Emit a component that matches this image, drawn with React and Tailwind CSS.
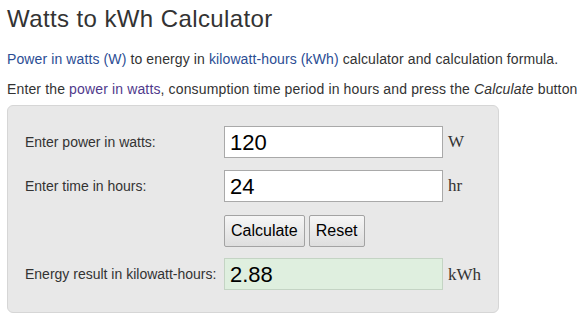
import React, { useState } from 'react';

function App() {
  const [watts, setWatts] = useState('120');
  const [hours, setHours] = useState('24');
  const [result, setResult] = useState('2.88');

  const calculate = () => {
    const w = parseFloat(watts);
    const h = parseFloat(hours);
    if (!isNaN(w) && !isNaN(h)) setResult(String(Math.round((w * h) / 1000 * 1e6) / 1e6));
  };

  const reset = () => {
    setWatts('');
    setHours('');
    setResult('');
  };

  return (
    <div className="min-h-screen bg-white pl-[7px] font-['Liberation_Sans',Arial,sans-serif] text-[#333]">
      {/* Title */}
      <h1 className="pt-[6px] text-[24px] leading-[26px] font-normal tracking-[0.4px] text-[#333]">
        Watts to kWh Calculator
      </h1>

      {/* Intro */}
      <p className="mt-[17px] whitespace-nowrap text-[14px] leading-[20px] tracking-[0.11px]">
        <a className="text-[#2b4d94]">Power in watts (W)</a> to energy in{' '}
        <a className="text-[#2b4d94]">kilowatt-hours (kWh)</a> calculator and calculation formula.
      </p>
      <p className="mt-[10px] whitespace-nowrap text-[14px] leading-[20px] tracking-[0.14px]">
        Enter the <a className="text-[#4f3a8c]">power in watts</a>, consumption time period in hours and press the <i>Calculate</i> button
      </p>

      {/* Calculator panel */}
      <div className="mt-[6px] w-[492px] rounded-[6px] border border-[#d6d6d6] bg-[#e8e8e8] pt-[20px] pb-[22px] pl-[17px]">
        <div className="grid grid-cols-[199px_219px_auto] items-center gap-y-[12px]">
          <label className="text-[14px]">Enter power in watts:</label>
          <input
            value={watts}
            onChange={(e) => setWatts(e.target.value)}
            className="h-[32px] w-[219px] border border-[#a9a9a9] bg-white px-[5px] text-[22px] text-black outline-none"
          />
          <span className="pl-[5px] font-['Liberation_Serif','Times_New_Roman',serif] text-[17px] text-[#333]">W</span>

          <label className="text-[14px]">Enter time in hours:</label>
          <input
            value={hours}
            onChange={(e) => setHours(e.target.value)}
            className="h-[32px] w-[219px] border border-[#a9a9a9] bg-white px-[5px] text-[22px] text-black outline-none"
          />
          <span className="pl-[5px] font-['Liberation_Serif','Times_New_Roman',serif] text-[17px] text-[#333]">hr</span>

          <div className="pt-[1px]" />
          <div className="flex gap-[4px] pt-[1px]">
            <button
              onClick={calculate}
              className="h-[32px] rounded-[2px] border border-[#a3a3a3] bg-gradient-to-b from-[#f6f6f6] to-[#dedede] px-[6px] text-[16px] text-black"
            >
              Calculate
            </button>
            <button
              onClick={reset}
              className="h-[32px] rounded-[2px] border border-[#a3a3a3] bg-gradient-to-b from-[#f6f6f6] to-[#dedede] px-[6px] text-[16px] text-black"
            >
              Reset
            </button>
          </div>
          <div />

          <label className="whitespace-nowrap text-[14px]">Energy result in kilowatt-hours:</label>
          <input
            readOnly
            value={result}
            className="-mt-[1px] h-[32px] w-[219px] border border-[#c4d4c4] bg-[#dfefdf] px-[5px] text-[22px] text-black outline-none"
          />
          <span className="pl-[5px] font-['Liberation_Serif','Times_New_Roman',serif] text-[17px] text-[#333]">kWh</span>
        </div>
      </div>
    </div>
  );
}

export default App;
